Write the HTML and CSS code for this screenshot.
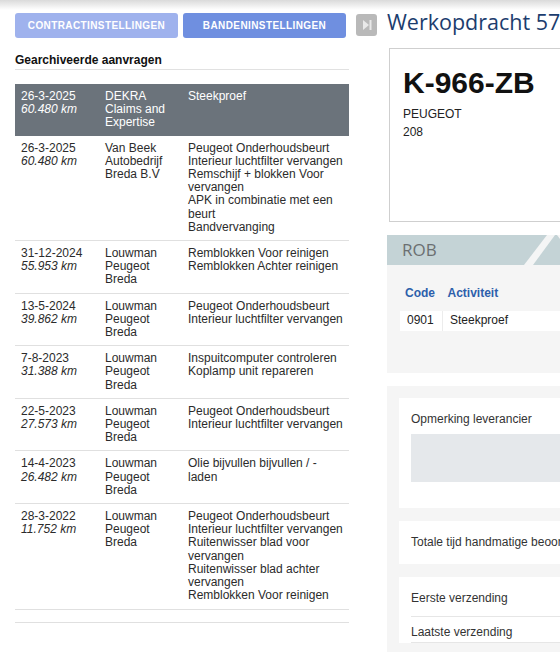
FILE: index.html
```html
<!DOCTYPE html>
<html lang="nl">
<head>
<meta charset="utf-8">
<title>Werkopdracht 57</title>
<link rel="stylesheet" href="styles.css">
</head>
<body>
<div class="page">
  <header class="topbar">
    <button class="btn btn-light" type="button">Contractinstellingen</button>
    <button class="btn btn-blue" type="button">Bandeninstellingen</button>
    <span class="skip-icon">
      <svg width="21" height="22" viewBox="0 0 21 22" aria-hidden="true">
        <polygon points="7,6 13,11 7,16" fill="#e9e9e9"/>
        <rect x="13.5" y="6" width="2" height="10" fill="#e9e9e9"/>
      </svg>
    </span>
    <h1 class="title">Werkopdracht 57</h1>
  </header>

  <main class="main">
    <section class="archive">
      <h2 class="archive-title">Gearchiveerde aanvragen</h2>
      <table class="arch-table">
        <colgroup><col class="c1"><col class="c2"><col class="c3"></colgroup>
        <tbody>
          <tr class="active">
            <td>26-3-2025<br><em>60.480 km</em></td>
            <td>DEKRA<br>Claims and<br>Expertise</td>
            <td>Steekproef</td>
          </tr>
          <tr>
            <td>26-3-2025<br><em>60.480 km</em></td>
            <td>Van Beek<br>Autobedrijf<br>Breda B.V</td>
            <td>Peugeot Onderhoudsbeurt<br>Interieur luchtfilter vervangen<br>Remschijf + blokken Voor vervangen<br>APK in combinatie met een beurt<br>Bandvervanging</td>
          </tr>
          <tr>
            <td>31-12-2024<br><em>55.953 km</em></td>
            <td>Louwman<br>Peugeot<br>Breda</td>
            <td>Remblokken Voor reinigen<br>Remblokken Achter reinigen</td>
          </tr>
          <tr>
            <td>13-5-2024<br><em>39.862 km</em></td>
            <td>Louwman<br>Peugeot<br>Breda</td>
            <td>Peugeot Onderhoudsbeurt<br>Interieur luchtfilter vervangen</td>
          </tr>
          <tr>
            <td>7-8-2023<br><em>31.388 km</em></td>
            <td>Louwman<br>Peugeot<br>Breda</td>
            <td>Inspuitcomputer controleren<br>Koplamp unit repareren</td>
          </tr>
          <tr>
            <td>22-5-2023<br><em>27.573 km</em></td>
            <td>Louwman<br>Peugeot<br>Breda</td>
            <td>Peugeot Onderhoudsbeurt<br>Interieur luchtfilter vervangen</td>
          </tr>
          <tr>
            <td>14-4-2023<br><em>26.482 km</em></td>
            <td>Louwman<br>Peugeot<br>Breda</td>
            <td>Olie bijvullen bijvullen / -<br>laden</td>
          </tr>
          <tr>
            <td>28-3-2022<br><em>11.752 km</em></td>
            <td>Louwman<br>Peugeot<br>Breda</td>
            <td>Peugeot Onderhoudsbeurt<br>Interieur luchtfilter vervangen<br>Ruitenwisser blad voor vervangen<br>Ruitenwisser blad achter vervangen<br>Remblokken Voor reinigen</td>
          </tr>
          <tr class="empty"><td></td><td></td><td></td></tr>
        </tbody>
      </table>
    </section>

    <section class="details">
      <div class="vehicle-card">
        <div class="plate">K-966-ZB</div>
        <div class="vehicle-line">PEUGEOT</div>
        <div class="vehicle-line">208</div>
      </div>

      <div class="panel rob-panel">
        <div class="rob-bar">
          <span class="rob-title">ROB</span>
          <svg class="rob-stripes" width="80" height="30" viewBox="0 0 80 30" aria-hidden="true">
            <polygon points="9,30 18,30 40,0 32,0" fill="#f4f5f5"/>
            <polygon points="42,0 80,0 80,30 64,30" fill="#f5f5f5"/>
          </svg>
        </div>
        <div class="rob-body">
          <table class="rob-table">
            <thead>
              <tr><th class="code">Code</th><th>Activiteit</th></tr>
            </thead>
            <tbody>
              <tr><td class="code">0901</td><td>Steekproef</td></tr>
            </tbody>
          </table>
        </div>
      </div>

      <div class="panel info-panel">
        <div class="info-card remark-card">
          <div class="label">Opmerking leverancier</div>
          <div class="remark-box"></div>
        </div>
        <div class="info-card time-card">
          <div class="label">Totale tijd handmatige beoordeling</div>
        </div>
        <div class="info-card send-card">
          <div class="send-row first">Eerste verzending</div>
          <div class="send-row second">Laatste verzending</div>
        </div>
      </div>
    </section>
  </main>
</div>
</body>
</html>
```

FILE: styles.css
```css
html {
  overflow: hidden;
}

body {
  margin: 0;
  background: #fff linear-gradient(#dadada, #ffffff 10px) no-repeat;
  background-size: 100% 12px;
  font-family: "Liberation Sans", Arial, sans-serif;
  font-size: 12px;
  color: #2b2b2b;
}

.page {
  padding: 13px 0 0 15px;
  width: 760px;
}

/* top bar */
.topbar {
  display: flex;
  align-items: flex-start;
  height: 25px;
}

.btn {
  width: 163px;
  height: 25px;
  margin: 0 5px 0 0;
  padding: 0;
  border: none;
  border-radius: 3px;
  font-family: "Liberation Sans", Arial, sans-serif;
  font-size: 10px;
  font-weight: bold;
  letter-spacing: 0.4px;
  text-transform: uppercase;
  color: #fff;
}

.btn-light {
  background: #9fb2ed;
}

.btn-blue {
  background: #6f8fe0;
}

.skip-icon {
  display: block;
  width: 21px;
  height: 22px;
  margin: 1px 0 0 5px;
  background: #b9b9b9;
  border-radius: 3px;
}

.skip-icon svg {
  display: block;
}

.title {
  margin: -4px 0 0 10px;
  font-family: "Open Sans", sans-serif;
  font-size: 21.5px;
  line-height: 26px;
  font-weight: normal;
  color: #1c3d6e;
  white-space: nowrap;
}

/* main */
.main {
  display: flex;
  align-items: flex-start;
  gap: 38px;
  margin-top: 10px;
}

.archive {
  width: 334px;
  flex: none;
}

.archive-title {
  margin: 5px 0 0;
  padding-bottom: 2px;
  font-size: 12px;
  line-height: 14px;
  font-weight: bold;
  color: #111;
  border-bottom: 1px solid #e1e1e1;
}

.arch-table {
  width: 334px;
  margin-top: 14px;
  border-collapse: collapse;
  table-layout: fixed;
}

.arch-table .c1 { width: 84px; }
.arch-table .c2 { width: 83px; }
.arch-table .c3 { width: 167px; }

.arch-table td {
  padding: 6px;
  vertical-align: top;
  line-height: 13.2px;
  border-bottom: 1px solid #e0e0e0;
}

.arch-table em {
  font-style: italic;
}

.arch-table tr.active td {
  background: #6b737b;
  color: #fff;
  border-bottom: none;
}

/* details column */
.details {
  width: 320px;
  flex: none;
}

.vehicle-card {
  box-sizing: border-box;
  height: 174px;
  margin-left: 2px;
  padding: 17px 13px 0;
  border: 1px solid #cfcfcf;
  background: #fff;
}

.plate {
  font-size: 30px;
  line-height: 34px;
  font-weight: bold;
  color: #111;
  margin-bottom: 5px;
}

.vehicle-line {
  font-size: 12px;
  line-height: 18px;
  color: #222;
}

.panel {
  background: #f5f5f5;
  margin-top: 13px;
}

.rob-bar {
  position: relative;
  height: 30px;
  padding-left: 15px;
  background: #c4d3d6;
  overflow: hidden;
}

.rob-title {
  font-family: "Open Sans", sans-serif;
  font-size: 17px;
  line-height: 30px;
  color: #6b6f71;
}

.rob-stripes {
  position: absolute;
  top: 0;
  left: 128px;
}

.rob-body {
  padding: 14px 13px 42px;
}

.rob-table {
  width: 100%;
  border-collapse: collapse;
}

.rob-table th {
  padding: 7px 6px 11px 5px;
  text-align: left;
  font-weight: bold;
  line-height: 14px;
  color: #2d5fab;
}

.rob-table td {
  padding: 2px 6px 4px 7px;
  line-height: 14px;
  background: #fff;
  color: #222;
}

.rob-table .code {
  width: 29px;
}

.rob-table td.code {
  border-right: 1px solid #ececec;
}

.info-panel {
  padding: 12px 0 12px 12px;
}

.info-card {
  background: #fff;
  padding: 0 12px;
  white-space: nowrap;
}

.info-card + .info-card {
  margin-top: 13px;
}

.label {
  line-height: 14px;
  color: #333;
}

.remark-card {
  padding-top: 14px;
  padding-bottom: 26px;
}

.remark-box {
  height: 48px;
  margin-top: 8px;
  background: #e5e8eb;
}

.time-card {
  padding-top: 14px;
  padding-bottom: 15px;
}

.send-card {
  padding-top: 7px;
}

.send-row {
  line-height: 14px;
  color: #333;
  border-bottom: 1px solid #e6e6e6;
}

.send-row.first {
  padding: 7px 0 11px;
}

.send-row.second {
  padding: 8px 0 3px;
}
```
